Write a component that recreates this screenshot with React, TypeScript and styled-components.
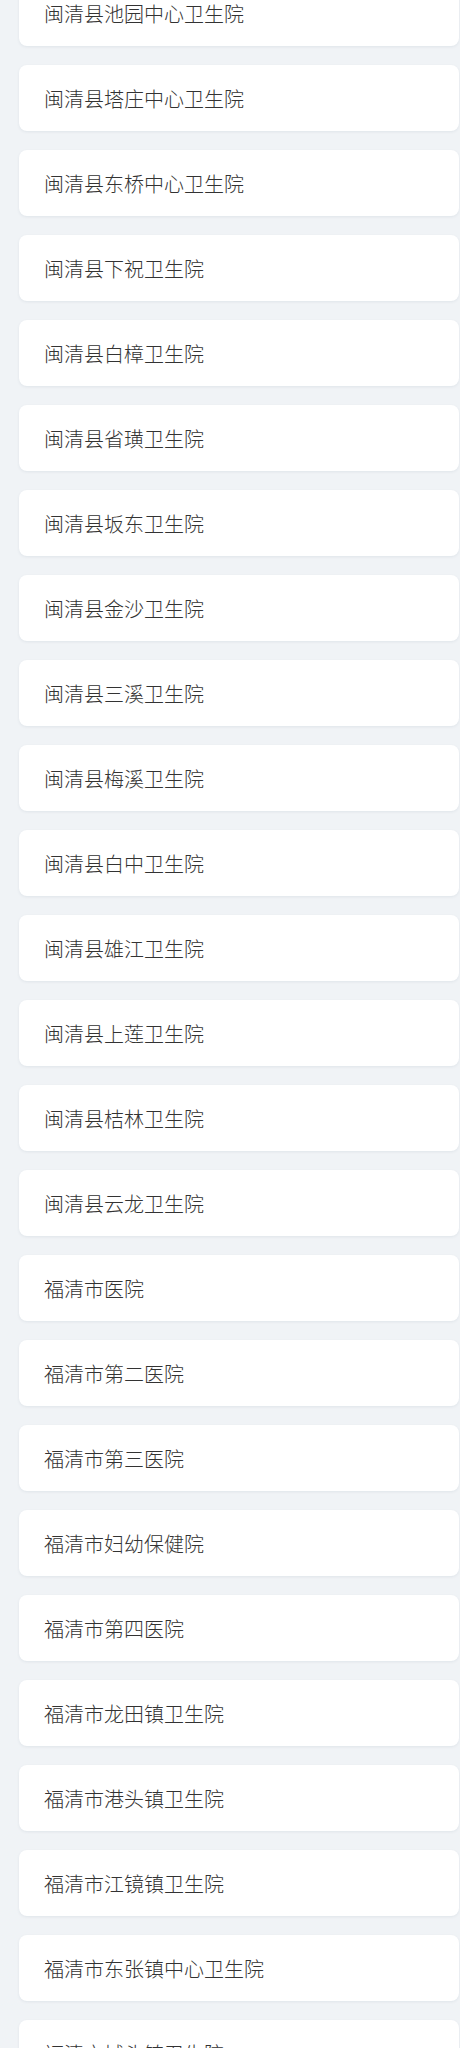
import React from "react";
import styled, { createGlobalStyle } from "styled-components";

const Global = createGlobalStyle`
  html, body {
    margin: 0;
    padding: 0;
    background: #f0f3f6;
    font-family: "Noto Sans CJK SC", "Noto Sans", sans-serif;
  }
`;

const List = styled.div`
  display: flex;
  flex-direction: column;
  gap: 19px;
  margin-top: -20px;
  padding: 0 1px 40px 19px;
`;

const Card = styled.div`
  height: 66px;
  display: flex;
  align-items: center;
  padding-left: 25px;
  background: #ffffff;
  border-radius: 8px;
  box-shadow: 0 1px 3px rgba(40, 60, 90, 0.08);
  font-size: 20px;
  font-weight: 300;
  color: #333333;
  box-sizing: border-box;
`;

const items = [
  "闽清县池园中心卫生院",
  "闽清县塔庄中心卫生院",
  "闽清县东桥中心卫生院",
  "闽清县下祝卫生院",
  "闽清县白樟卫生院",
  "闽清县省璜卫生院",
  "闽清县坂东卫生院",
  "闽清县金沙卫生院",
  "闽清县三溪卫生院",
  "闽清县梅溪卫生院",
  "闽清县白中卫生院",
  "闽清县雄江卫生院",
  "闽清县上莲卫生院",
  "闽清县桔林卫生院",
  "闽清县云龙卫生院",
  "福清市医院",
  "福清市第二医院",
  "福清市第三医院",
  "福清市妇幼保健院",
  "福清市第四医院",
  "福清市龙田镇卫生院",
  "福清市港头镇卫生院",
  "福清市江镜镇卫生院",
  "福清市东张镇中心卫生院",
  "福清市城头镇卫生院",
];

export default function App() {
  return (
    <>
      <Global />
      <List>
        {items.map((t) => (
          <Card key={t}>{t}</Card>
        ))}
      </List>
    </>
  );
}
